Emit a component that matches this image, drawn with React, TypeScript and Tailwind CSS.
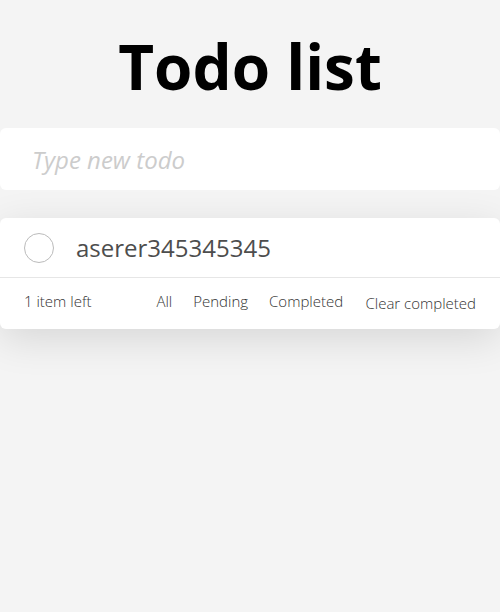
import React, { useState } from 'react';

export default function App() {
  const [text, setText] = useState('');
  const [todos] = useState([{ id: 1, title: 'aserer345345345', done: false }]);

  return (
    <div className="min-h-[612px] bg-[#f4f4f4] font-['Open_Sans',sans-serif]">
      <h1 className="pt-[23px] text-center text-[62px] font-bold leading-[87px] text-black">
        Todo list
      </h1>

      {/* New todo */}
      <div className="mt-[18px]">
        <input
          value={text}
          onChange={(e) => setText(e.target.value)}
          placeholder="Type new todo"
          className="h-[62px] w-full rounded-md bg-white px-[32px] text-[24px] italic text-[#4d4d4d] placeholder:text-[#cccccc] outline-none"
        />
      </div>

      {/* List */}
      <div className="mt-[28px] rounded-md bg-white shadow-[0_10px_40px_rgba(0,0,0,0.12)]">
        {todos.map((todo) => (
          <div key={todo.id} className="flex h-[60px] items-center border-b border-[#e6e6e6] pl-[24px]">
            <span className="h-[30px] w-[30px] rounded-full border border-[#bbbbbb]" />
            <span className="ml-[22px] text-[24px] text-[#4d4d4d]">{todo.title}</span>
          </div>
        ))}
        <div className="flex h-[51px] items-center px-[24px] pb-[4px] text-[15px] font-light text-[#333]">
          <span>1 item left</span>
          <div className="ml-[65px] flex gap-[21px]">
            <button>All</button>
            <button>Pending</button>
            <button>Completed</button>
          </div>
          <button className="ml-auto mt-[3px]">Clear completed</button>
        </div>
      </div>
    </div>
  );
}
